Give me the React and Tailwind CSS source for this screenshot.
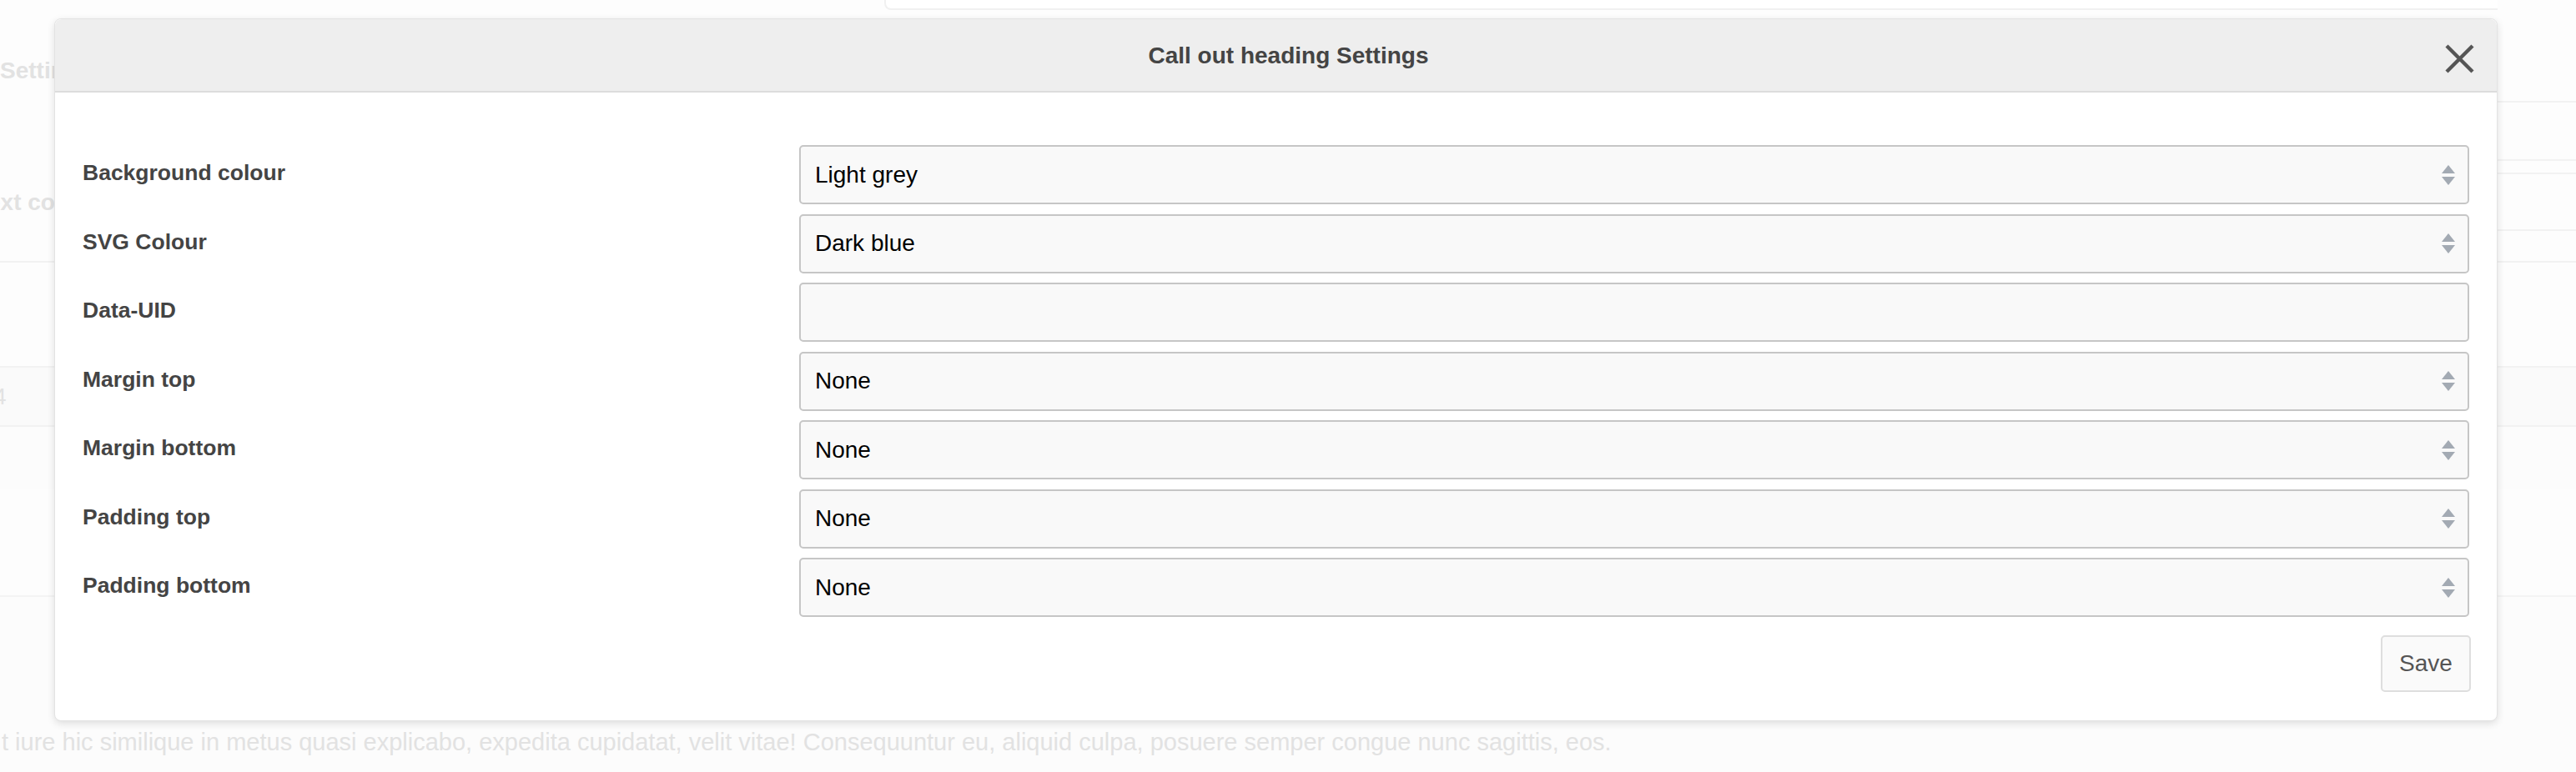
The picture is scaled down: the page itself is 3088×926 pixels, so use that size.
import React from "react";

const fields = [
  { label: "Background colour", value: "Light grey", type: "select" },
  { label: "SVG Colour", value: "Dark blue", type: "select" },
  { label: "Data-UID", value: "", type: "input" },
  { label: "Margin top", value: "None", type: "select" },
  { label: "Margin bottom", value: "None", type: "select" },
  { label: "Padding top", value: "None", type: "select" },
  { label: "Padding bottom", value: "None", type: "select" },
];

function SelectArrows() {
  return (
    <svg width="16" height="24" viewBox="0 0 16 24" className="shrink-0">
      <polygon points="8,0 16,10 0,10" fill="#a3aab3" />
      <polygon points="0,14 16,14 8,24" fill="#a3aab3" />
    </svg>
  );
}

function Field({ field }) {
  return (
    <>
      <div className="flex items-center pb-[3px] text-[26.5px] font-bold text-[#444]">{field.label}</div>
      <div className="flex h-[71px] items-center justify-between rounded-[5px] border-2 border-[#c6c6c6] bg-[#f9f9f9] pl-[17px] pr-[15px] text-[28px] text-black">
        <span>{field.value}</span>
        {field.type === "select" && <SelectArrows />}
      </div>
    </>
  );
}

function Backdrop() {
  return (
    <div className="flex h-[926px] w-[3088px] flex-col bg-[#fdfdfd] text-[28px] text-[#e2e2e2]">
      <div className="flex h-[315px] justify-between border-b-2 border-[#f2f2f2]">
        <div className="flex w-[120px] flex-col">
          <div className="mt-[64px] font-bold">Settings</div>
          <div className="mt-[116px] -ml-[30px] font-bold whitespace-nowrap">Text colour</div>
        </div>
        <div className="h-[12px] flex-1 ml-[940px] rounded-bl-lg border-b-2 border-l-2 border-[#f0f0f0] bg-white" />
        <div className="flex w-[94px] flex-col">
          <div className="h-[123px] border-b-2 border-[#f2f2f2]" />
          <div className="h-[70px] border-b-2 border-[#f2f2f2]" />
          <div className="h-[16px] border-b-2 border-[#f2f2f2]" />
          <div className="h-[68px] border-b-2 border-[#f2f2f2]" />
        </div>
      </div>
      <div className="h-[126px] border-b-2 border-[#f2f2f2]" />
      <div className="flex h-[71px] items-center border-b-2 border-[#f2f2f2] bg-[#fafafa]">
        <span className="-ml-[8px]">4</span>
      </div>
      <div className="h-[74px] bg-[#fcfcfc]" />
      <div className="h-[130px] border-b-2 border-[#f4f4f4]" />
      <div className="flex flex-1 items-end bg-[#fcfcfc] pb-[14px]">
        <p className="whitespace-nowrap pl-[2px] text-[29px]">
          t iure hic similique in metus quasi explicabo, expedita cupidatat, velit vitae! Consequuntur eu, aliquid culpa, posuere semper congue nunc sagittis, eos.
        </p>
      </div>
    </div>
  );
}

export default function App() {
  return (
    <div
      className="relative h-[926px] w-[3088px] overflow-hidden"
      style={{ fontFamily: '"Liberation Sans", Arial, sans-serif' }}
    >
      <Backdrop />

      <div className="absolute left-[65px] top-[22px] flex h-[843px] w-[2929px] flex-col rounded-lg border border-[#e3e3e3] bg-white shadow-[0_3px_10px_rgba(0,0,0,0.12)]">
        <div className="relative flex h-[88px] items-center justify-center rounded-t-lg border-b-2 border-[#dcdcdc] bg-[#eeeeee] pt-[2px]">
          <h2 className="ml-[30px] text-[28px] font-bold text-[#444]">Call out heading Settings</h2>
          <button className="absolute right-[27px] top-[30px] h-[35px] w-[35px]">
            <svg width="35" height="35" viewBox="0 0 35 35">
              <path d="M2 2 L33 33 M33 2 L2 33" stroke="#555" strokeWidth="4.4" strokeLinecap="butt" />
            </svg>
          </button>
        </div>

        <div className="flex flex-col px-[33px] pt-[63px]">
          <div className="grid grid-cols-[859px_1fr] gap-y-[11.5px]">
            {fields.map((f) => (
              <Field key={f.label} field={f} />
            ))}
          </div>
          <div className="mt-[22px] flex justify-end -mr-[2px]">
            <button className="h-[68px] w-[108px] rounded-[5px] border-2 border-[#dedede] bg-[#fafafa] text-[28px] text-[#555]">
              Save
            </button>
          </div>
        </div>
      </div>
    </div>
  );
}
